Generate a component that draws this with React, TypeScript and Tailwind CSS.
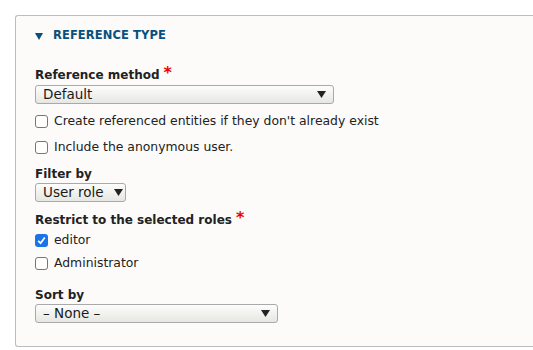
import React from "react";

const font = { fontFamily: '"DejaVu Sans", "Noto Sans", sans-serif' };

function Select({ value, width }: { value: string; width: string }) {
  return (
    <div
      className={`flex h-[19px] items-center justify-between gap-[10px] rounded-[3px] border border-[#a9a9a9] bg-gradient-to-b from-[#fdfdfc] to-[#e6e6e2] pl-[7px] pr-[7px] text-[13.5px] leading-none text-[#1a1a1a] ${width}`}
    >
      <span className="whitespace-nowrap">{value}</span>
      <svg width="9" height="7" viewBox="0 0 9 7" className="shrink-0">
        <path d="M0 0 H9 L4.5 7 Z" fill="#222" />
      </svg>
    </div>
  );
}

function Checkbox({ label, checked }: { label: string; checked?: boolean }) {
  return (
    <div className="flex h-[16px] items-center gap-[6px] text-[12.4px] leading-none text-[#222]">
      {checked ? (
        <span className="flex h-[13px] w-[13px] items-center justify-center rounded-[3px] bg-[#1a73e8]">
          <svg width="9" height="9" viewBox="0 0 9 9">
            <path d="M1.2 4.8 L3.6 7.2 L7.8 1.5" stroke="#fff" strokeWidth="1.8" fill="none" />
          </svg>
        </span>
      ) : (
        <span className="h-[13px] w-[13px] rounded-[3px] border border-[#767676] bg-white" />
      )}
      <span>{label}</span>
    </div>
  );
}

function Label({ text, required }: { text: string; required?: boolean }) {
  return (
    <div className="flex h-[14px] items-center text-[12px] font-bold leading-none text-[#222]">
      <span>{text}</span>
      {required && (
        <span className="ml-[4px] -mt-[4px] text-[16px] leading-none text-[#e00]">*</span>
      )}
    </div>
  );
}

export default function App() {
  return (
    <div className="h-[350px] w-[533px] overflow-hidden bg-white pl-[15px] pt-[15px]" style={font}>
      <div className="h-[332px] w-[540px] rounded-l-[3px] border-b border-l border-t border-[#bdbdbd] bg-[#fcfbfa] pl-[19px] pt-[13px]">
        <div className="flex h-[14px] items-center gap-[10px] text-[11.5px] font-bold leading-none tracking-[0.1px] text-[#0a4f7d]">
          <svg width="8" height="7" viewBox="0 0 8 7">
            <path d="M0 0 H8 L4 7 Z" fill="#0a4f7d" />
          </svg>
          <span>REFERENCE TYPE</span>
        </div>

        <div className="mt-[25px]">
          <Label text="Reference method" required />
        </div>
        <div className="mt-[3px]">
          <Select value="Default" width="w-[299px]" />
        </div>
        <div className="mt-[9px]">
          <Checkbox label="Create referenced entities if they don't already exist" />
        </div>
        <div className="mt-[10px]">
          <Checkbox label="Include the anonymous user." />
        </div>

        <div className="mt-[12px]">
          <Label text="Filter by" />
        </div>
        <div className="mt-[2px]">
          <Select value="User role" width="w-[91px]" />
        </div>

        <div className="mt-[11px]">
          <Label text="Restrict to the selected roles" required />
        </div>
        <div className="mt-[5px]">
          <Checkbox label="editor" checked />
        </div>
        <div className="mt-[7px]">
          <Checkbox label="Administrator" />
        </div>

        <div className="mt-[17px]">
          <Label text="Sort by" />
        </div>
        <div className="mt-[2px]">
          <Select value="– None –" width="w-[243px]" />
        </div>
      </div>
    </div>
  );
}
